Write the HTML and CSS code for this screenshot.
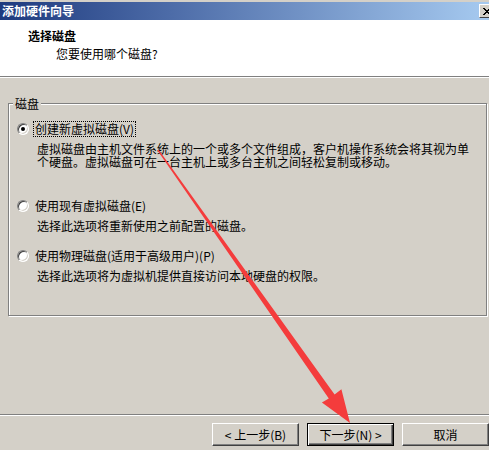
FILE: index.html
```html
<!DOCTYPE html>
<html lang="zh-CN">
<head>
<meta charset="utf-8">
<title>添加硬件向导</title>
<link rel="stylesheet" href="styles.css">
</head>
<body>
<div class="window">
  <div class="titlebar">
    <span class="title">添加硬件向导</span>
    <span class="close">
      <svg width="8" height="7" viewBox="0 0 8 7"><path d="M0 0h2v1h1v1h2V1h1V0h2v1H7v1H6v1H5v1h1v1h1v1h1v1H6V6H5V5H3v1H2v1H0V6h1V5h1V4h1V3H2V2H1V1H0z" fill="#000"/></svg>
    </span>
  </div>
  <div class="header">
    <div class="h-title">选择磁盘</div>
    <div class="h-sub">您要使用哪个磁盘?</div>
  </div>
  <div class="content">
    <div class="group">
      <span class="legend">磁盘</span>
      <div class="opt opt1">
        <div class="row"><span class="radio checked"></span><span class="label focus">创建新虚拟磁盘(V)</span></div>
        <div class="desc">虚拟磁盘由主机文件系统上的一个或多个文件组成，客户机操作系统会将其视为单<br>个硬盘。虚拟磁盘可在一台主机上或多台主机之间轻松复制或移动。</div>
      </div>
      <div class="opt opt2">
        <div class="row"><span class="radio"></span><span class="label">使用现有虚拟磁盘(E)</span></div>
        <div class="desc">选择此选项将重新使用之前配置的磁盘。</div>
      </div>
      <div class="opt opt3">
        <div class="row"><span class="radio"></span><span class="label">使用物理磁盘(适用于高级用户)(P)</span></div>
        <div class="desc">选择此选项将为虚拟机提供直接访问本地硬盘的权限。</div>
      </div>
    </div>
  </div>
  <div class="footer">
    <button class="btn">&lt; 上一步(B)</button>
    <button class="btn default">下一步(N) &gt;</button>
    <button class="btn">取消</button>
  </div>
  <svg class="arrow" width="489" height="450" viewBox="0 0 489 450">
    <polygon points="158.5,149.6 334.6,394.6 341.4,389.2 350,423 321.9,402.4 328.8,398.6 157.5,150.4" fill="#f43c3c"/>
  </svg>
</div>
</body>
</html>
```
FILE: styles.css
```css
html, body {
  margin: 0;
  padding: 0;
}

body {
  font-family: "Noto Sans CJK SC", "Liberation Sans", sans-serif;
  font-size: 12px;
  color: #000;
  background: #d4d0c8;
}

.window {
  position: relative;
  width: 489px;
  height: 450px;
  overflow: hidden;
  display: flex;
  flex-direction: column;
  background: #d4d0c8;
}

.titlebar {
  box-sizing: border-box;
  height: 20px;
  border-top: 2px solid #d4d0c8;
  background: linear-gradient(to right, #1e3a7e 0%, #4d6ca8 35%, #a6caf0 100%);
  display: flex;
  align-items: center;
  justify-content: space-between;
  padding-left: 2px;
}

.title {
  color: #fff;
  font-weight: 700;
  line-height: 14px;
}

.close {
  box-sizing: border-box;
  width: 16px;
  height: 14px;
  flex: none;
  margin-right: -6px;
  background: #d4d0c8;
  border: 1px solid;
  border-color: #fff #404040 #404040 #fff;
  display: flex;
  align-items: center;
  justify-content: center;
}

.header {
  box-sizing: border-box;
  height: 57px;
  background: #fff;
  border-bottom: 1px solid #808080;
  padding-top: 9px;
}

.h-title {
  margin-left: 28px;
  font-weight: 700;
  line-height: 14px;
}

.h-sub {
  margin-left: 56px;
  margin-top: 4px;
  line-height: 14px;
}

.content {
  flex: 1;
  border-top: 1px solid #fff;
  padding: 25px 0 0 8px;
}

.group {
  position: relative;
  box-sizing: border-box;
  width: 479px;
  height: 213px;
  border: 1px solid #808080;
  box-shadow: 1px 1px 0 #fff, inset 1px 1px 0 #fff;
  padding: 17px 0 0 8px;
}

.legend {
  position: absolute;
  top: -7px;
  left: 4px;
  padding: 0 2px;
  background: #d4d0c8;
  line-height: 14px;
}

.opt2 {
  margin-top: 30px;
}

.opt3 {
  margin-top: 16px;
}

.row {
  display: flex;
  align-items: center;
  height: 16px;
}

.radio {
  position: relative;
  box-sizing: border-box;
  width: 12px;
  height: 12px;
  flex: none;
  border-radius: 50%;
  background: #fff;
  border: 1px solid;
  border-color: #808080 #fff #fff #808080;
  box-shadow: inset 1px 1px 0 #404040, inset -1px -1px 0 #d4d0c8;
}

.radio.checked::after {
  content: "";
  position: absolute;
  left: 3px;
  top: 3px;
  width: 4px;
  height: 4px;
  border-radius: 50%;
  background: #000;
}

.label {
  margin-left: 4px;
  padding: 0 1px;
  line-height: 14px;
  border: 1px solid transparent;
}

.label.focus {
  border: 1px dotted #000;
}

.desc {
  margin-top: 5px;
  margin-left: 20px;
  line-height: 13px;
}

.footer {
  box-sizing: border-box;
  height: 36px;
  border-top: 1px solid #808080;
  box-shadow: inset 0 1px 0 #fff;
  padding-top: 8px;
  padding-left: 212px;
  display: flex;
  gap: 8px;
}

.btn {
  box-sizing: border-box;
  width: 87px;
  height: 23px;
  flex: none;
  margin: 0;
  padding: 0;
  font-family: "Noto Sans CJK SC", "Liberation Sans", sans-serif;
  font-size: 12px;
  line-height: 14px;
  color: #000;
  background: #d4d0c8;
  border: 1px solid;
  border-color: #fff #404040 #404040 #fff;
  box-shadow: inset -1px -1px 0 #808080;
  border-radius: 0;
}

.btn.default {
  border-color: #000;
  box-shadow: inset 1px 1px 0 #fff, inset -1px -1px 0 #404040, inset -2px -2px 0 #808080;
}

.arrow {
  position: absolute;
  left: 0;
  top: 0;
  pointer-events: none;
}
```
